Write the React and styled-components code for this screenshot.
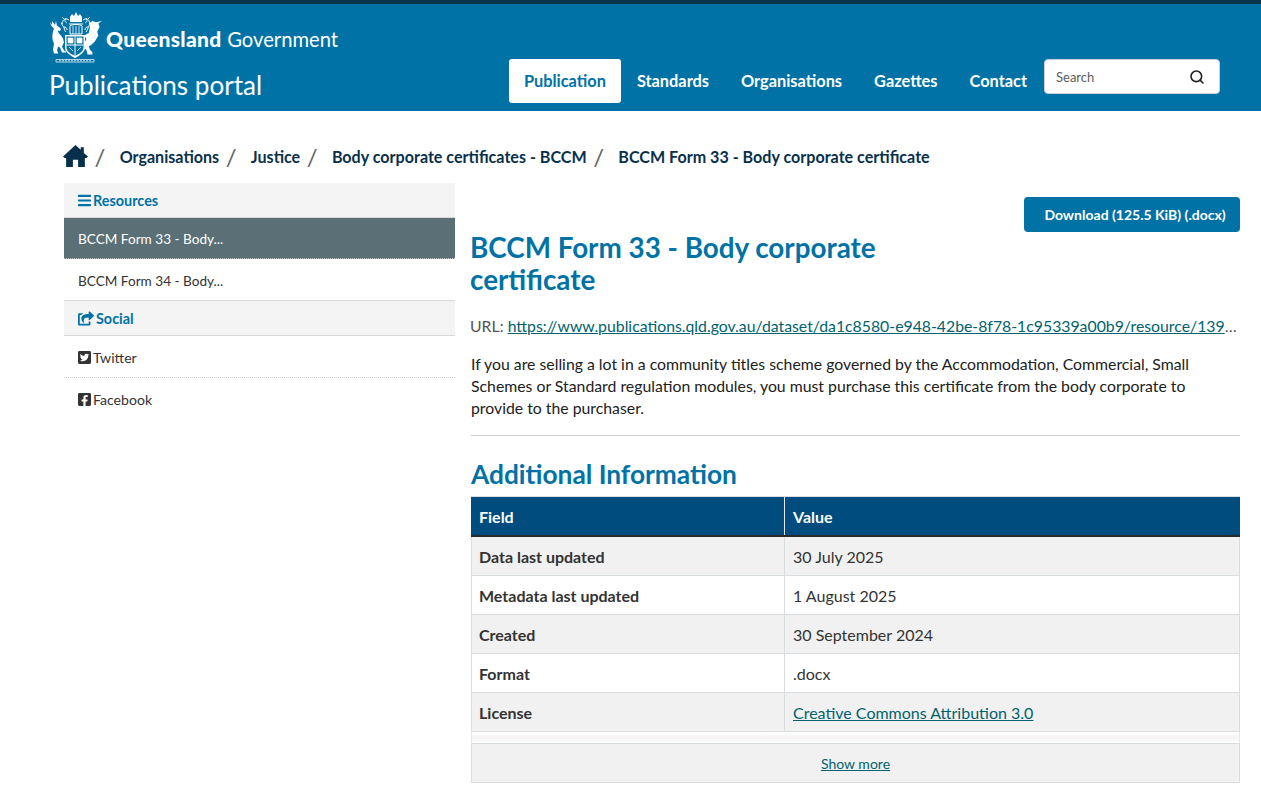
import React from 'react';
import styled, { createGlobalStyle } from 'styled-components';
import { FaBars, FaShareSquare, FaTwitterSquare, FaFacebookSquare } from 'react-icons/fa';
import { Search } from 'lucide-react';

const GlobalStyle = createGlobalStyle`
  * { box-sizing: border-box; }
  html, body { margin: 0; padding: 0; background: #fff; }
  body {
    font-family: Lato, "Liberation Sans", sans-serif;
    color: #212121;
    font-size: 16px;
    overflow: hidden;
  }
`;

const Page = styled.div`
  width: 1261px;
  height: 802px;
  overflow: hidden;
`;

const Header = styled.header`
  height: 111px;
  background: #0072a6;
  border-top: 4px solid #09344a;
  padding: 8px 41px 8px 49px;
  display: flex;
  justify-content: space-between;
`;

const Brand = styled.div`
  display: flex;
  flex-direction: column;
`;

const LogoRow = styled.div`
  display: flex;
  align-items: center;
  height: 52px;
  color: #fff;
`;

const WordMark = styled.div`
  font-size: 21px;
  margin: 1px 0 0 3px;
  letter-spacing: 0.3px;
  white-space: nowrap;
  b { font-weight: 900; }
  span { font-size: 20.2px; font-weight: 400; letter-spacing: 0; }
`;

const SiteName = styled.div`
  color: #fff;
  font-size: 26.1px;
  font-weight: 400;
  line-height: 32px;
  margin-top: 5px;
`;

const Nav = styled.nav`
  display: flex;
  align-items: flex-start;
  padding-top: 47px;
`;

const NavLink = styled.a`
  height: 44px;
  padding: 0 ${p => (p.$active ? '15px' : '16px')} 2px;
  display: flex;
  align-items: center;
  border-radius: 3px;
  font-size: 16.35px;
  font-weight: 700;
  color: ${p => (p.$active ? '#0072a6' : '#fff')};
  background: ${p => (p.$active ? '#fff' : 'transparent')};
`;

const SearchBox = styled.div`
  width: 176px;
  height: 35px;
  margin-left: 1px;
  background: #fff;
  border: 1px solid #ccd;
  border-radius: 4px;
  display: flex;
  align-items: center;
  justify-content: space-between;
  padding: 0 14px 0 11px;
  font-size: 13px;
  color: #5d5d5d;
  svg { color: #212121; }
`;

const Crumbs = styled.div`
  display: flex;
  align-items: center;
  height: 30px;
  margin: 30px 0 12px 63px;
  font-size: 16.1px;
  font-weight: 700;
  color: #09304a;
`;

const Crumb = styled.span`
  white-space: nowrap;
`;

const Slash = styled.span`
  font-weight: 400;
  font-size: 24px;
  color: #666;
  margin: 0 14.3px 0 6.5px;
`;

const Columns = styled.div`
  display: grid;
  grid-template-columns: 391px 769px;
  column-gap: 16px;
  margin-left: 64px;
`;

const Side = styled.aside`
  font-size: 13.6px;
`;

const SideHead = styled.div`
  height: 35px;
  padding-left: 14px;
  display: flex;
  align-items: center;
  gap: 2px;
  background: #f4f4f4;
  border-bottom: 1px solid #d8d8d8;
  color: #0072a6;
  font-size: 14.4px;
  font-weight: 700;
  svg { height: 15px; width: ${p => p.$icon || 13}px; }
`;

const SideItem = styled.div`
  height: ${p => p.$h}px;
  padding: 2px 0 0 14px;
  display: flex;
  align-items: center;
  gap: 2px;
  color: ${p => (p.$active ? '#fff' : '#333')};
  background: ${p => (p.$active ? '#5a6f76' : '#fff')};
  border-bottom: ${p => p.$line || 'none'};
  svg { height: 15px; width: 13px; }
`;

const SocialLabel = styled.span`
  font-size: 14.1px;
`;

const Main = styled.main`
  padding-top: 14px;
`;

const Actions = styled.div`
  display: flex;
  justify-content: flex-end;
`;

const DownloadButton = styled.a`
  width: 216px;
  height: 35px;
  display: flex;
  align-items: center;
  justify-content: center;
  padding-left: 6px;
  background: #0072a6;
  color: #fff;
  border-radius: 4px;
  font-size: 14px;
  font-weight: 700;
`;

const Title = styled.h1`
  margin: 0 0 0 -1px;
  width: 470px;
  color: #0072a6;
  font-size: 27.8px;
  font-weight: 700;
  line-height: 32px;
`;

const UrlLine = styled.div`
  margin: 18px 0 0 -1px;
  height: 24px;
  line-height: 24px;
  font-size: 15.8px;
  color: #555;
  white-space: nowrap;
  overflow: hidden;
  text-overflow: ellipsis;
`;

const TextLink = styled.a`
  color: #00626e;
  text-decoration: underline;
`;

const Description = styled.p`
  margin: 15px 0 0;
  font-size: 15.8px;
  line-height: 22px;
  color: #212121;
  padding-bottom: 16px;
  border-bottom: 1px solid #d0d0d0;
`;

const SubTitle = styled.h2`
  margin: 22px 0 0;
  color: #0072a6;
  font-size: 26.3px;
  font-weight: 700;
  line-height: 32px;
`;

const Table = styled.div`
  margin-top: 6px;
  border-top: 1px solid #d8dde0;
`;

const HeadRow = styled.div`
  display: grid;
  grid-template-columns: 313px 1fr;
  height: 40px;
  background: #004c7e;
  border-bottom: 2px solid #2a2a2a;
  color: #fff;
  font-weight: 700;
`;

const Row = styled.div`
  display: grid;
  grid-template-columns: 312px 1fr;
  height: 39px;
  background: ${p => (p.$odd ? '#f1f1f1' : '#fff')};
  border-bottom: 1px solid #d8dde0;
  border-left: 1px solid #d8dde0;
  border-right: 1px solid #d8dde0;
`;

const HeadCell = styled.div`
  display: flex;
  align-items: center;
  padding-left: 8px;
  & + & { border-left: 1px solid #e4e8ea; }
`;

const Cell = styled.div`
  display: flex;
  align-items: center;
  padding-left: 7px;
  font-weight: ${p => (p.$bold ? 700 : 400)};
  color: #333;
  & + & { border-left: 1px solid #d8dde0; padding-left: 8px; }
`;

const Fade = styled.div`
  height: 11px;
  background: linear-gradient(#fff, #f3f3f3 50%, #fff);
  border-left: 1px solid #e4e8ea;
  border-right: 1px solid #e4e8ea;
`;

const ShowMore = styled.div`
  height: 40px;
  background: #f1f1f1;
  border: 1px solid #d8dde0;
  display: flex;
  align-items: center;
  justify-content: center;
  font-size: 14px;
`;

const HomeIcon = () => (
  <svg width="25" height="22" viewBox="0 0 24 21" fill="currentColor">
    <path d="M12 0l5 4.5V2h3v5.5l4 3.5-1.5 1.5H21V21h-6.5v-7h-5v7H3v-8.500H1.500L0 11z" />
  </svg>
);

const Crest = () => (
  <svg width="54" height="52" viewBox="0 0 54 52" fill="none" stroke="#fff" strokeWidth="1">
    {/* crown and mantling */}
    <path d="M21 5l2-3 2 2 2-4 2 4 2-2 2 3v5H21z" fill="#fff" stroke="none" />
    <path d="M20 12h14M21 14c2-2 10-2 12 0v8H21z" />
    <path d="M24 14v8M27 14v8M30 14v8" strokeWidth="0.8" />
    <path d="M20 8c-3-2-5-1-6 1s-2 3 0 5 1 5 3 6M17 6c-2 2-1 4 1 5M15 15c2 0 3 1 3 3" />
    <path d="M34 8c3-2 5-1 6 1s1 3 0 5-2 5-3 6M37 6c2 2 1 4-1 5M39 15c-2 0-3 1-3 3" />
    <path d="M13 5l2 2M41 5l-2 2M12 11l2 1" />
    {/* stag */}
    <path
      d="M1 10l2 3V9l3 4 1-4 1 5 2 1 2 2-1 2-2-.500c0 2 1 3 3 5l2 3 1 4-2 4 2 4 2 1v1h-4l-2-5-2-1-1 4 1 2v1H5l-1-4 1-6c-2-3-2-8-1-12l1-3c-2-1-4-5-4-7z"
      fill="#fff"
      stroke="none"
    />
    {/* bird */}
    <path
      transform="translate(-10.6 -9) scale(1.2)"
      d="M53 15l-3 2 1 3-2 4 1 3-3 5-3 3-2 1 1 3 2 2v2h-4l-1-4-3-2 1-3 2-4-2-3 4-2 1-5-1-3 3-2 3 1z"
      fill="#fff"
      stroke="none"
    />
    {/* shield */}
    <path d="M16 23h20v13c0 4-6 8-10 10-4-2-10-6-10-10z" fill="#fff" stroke="none" />
    <path d="M17.500 24.500h17v11c0 4-5 7-8.500 8.500-3.500-1.500-8.500-4.500-8.500-8.500z" fill="#0072a6" stroke="none" />
    <path d="M26 24.500V44M17.500 33h17" />
    <path d="M19 26h5v5h-5zM28 26h5v5h-5zM20 35l4 4M32 35l-4 4" fill="#fff" strokeWidth="0.7" />
    {/* motto scroll */}
    <path d="M7 47.500h38v2.500H7z" strokeWidth="0.7" />
    <path d="M10 48.750h32" strokeDasharray="2 1" strokeWidth="0.7" />
  </svg>
);

const rows = [
  ['Data last updated', '30 July 2025'],
  ['Metadata last updated', '1 August 2025'],
  ['Created', '30 September 2024'],
  ['Format', '.docx'],
];

const crumbs = ['Organisations', 'Justice', 'Body corporate certificates - BCCM', 'BCCM Form 33 - Body corporate certificate'];

export default function App() {
  return (
    <Page>
      <GlobalStyle />
      <Header>
        <Brand>
          <LogoRow>
            <Crest />
            <WordMark><b>Queensland</b> <span>Government</span></WordMark>
          </LogoRow>
          <SiteName>Publications portal</SiteName>
        </Brand>
        <Nav>
          <NavLink $active>Publication</NavLink>
          <NavLink>Standards</NavLink>
          <NavLink>Organisations</NavLink>
          <NavLink>Gazettes</NavLink>
          <NavLink>Contact</NavLink>
          <SearchBox>Search<Search size={16} strokeWidth={2.4} /></SearchBox>
        </Nav>
      </Header>
      <Crumbs>
        <HomeIcon />
        {crumbs.map(c => (
          <React.Fragment key={c}>
            <Slash>/</Slash>
            <Crumb>{c}</Crumb>
          </React.Fragment>
        ))}
      </Crumbs>
      <Columns>
        <Side>
          <SideHead><FaBars />Resources</SideHead>
          <SideItem $h={41} $active $line="1px dotted #ccc">BCCM Form 33 - Body...</SideItem>
          <SideItem $h={42} $line="1px solid #d8d8d8">BCCM Form 34 - Body...</SideItem>
          <SideHead $icon={16}><FaShareSquare />Social</SideHead>
          <SideItem $h={42} $line="1px dotted #ccc"><FaTwitterSquare /><SocialLabel>Twitter</SocialLabel></SideItem>
          <SideItem $h={40}><FaFacebookSquare /><SocialLabel>Facebook</SocialLabel></SideItem>
        </Side>
        <Main>
          <Actions><DownloadButton>Download (125.5 KiB) (.docx)</DownloadButton></Actions>
          <Title>BCCM Form 33 - Body corporate certificate</Title>
          <UrlLine>
            URL: <TextLink>https://www.publications.qld.gov.au/dataset/da1c8580-e948-42be-8f78-1c95339a00b9/resource/139a8f25-3f9a-4a12-9f55-5e0c5b1d7c11/download/bccm-form-33.docx</TextLink>
          </UrlLine>
          <Description>
            If you are selling a lot in a community titles scheme governed by the Accommodation, Commercial, Small
            Schemes or Standard regulation modules, you must purchase this certificate from the body corporate to
            provide to the purchaser.
          </Description>
          <SubTitle>Additional Information</SubTitle>
          <Table>
            <HeadRow><HeadCell>Field</HeadCell><HeadCell>Value</HeadCell></HeadRow>
            {rows.map((r, i) => (
              <Row key={r[0]} $odd={i % 2 === 0}>
                <Cell $bold>{r[0]}</Cell>
                <Cell>{r[1]}</Cell>
              </Row>
            ))}
            <Row $odd>
              <Cell $bold>License</Cell>
              <Cell><TextLink>Creative Commons Attribution 3.0</TextLink></Cell>
            </Row>
            <Fade />
            <ShowMore><TextLink>Show more</TextLink></ShowMore>
          </Table>
        </Main>
      </Columns>
    </Page>
  );
}
